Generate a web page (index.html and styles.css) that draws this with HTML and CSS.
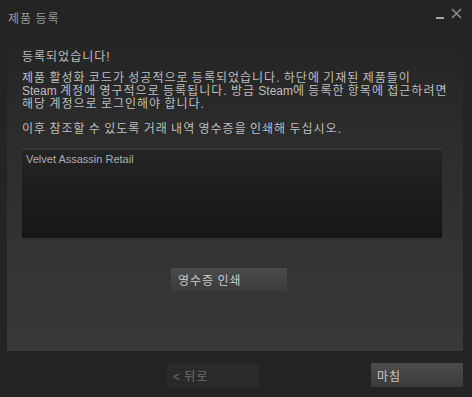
FILE: index.html
```html
<!DOCTYPE html>
<html lang="ko">
<head>
  <meta charset="UTF-8">
  <meta name="viewport" content="width=device-width, initial-scale=1.0">
  <title>제품 등록</title>
  <link rel="stylesheet" href="styles.css">
</head>
<body>
  <div class="window">
    <header class="titlebar">
      <span class="title">제품 등록</span>
      <div class="controls">
        <span class="minimize"></span>
        <svg class="close" width="11" height="11" viewBox="0 0 11 11">
          <path d="M1 1 L10 10 M10 1 L1 10" stroke="#8a8a8a" stroke-width="1.6" fill="none"/>
        </svg>
      </div>
    </header>

    <!-- Main content panel -->
    <div class="panel">
      <p class="heading">등록되었습니다!</p>
      <p class="text">제품 활성화 코드가 성공적으로 등록되었습니다. 하단에 기재된 제품들이<br>
        <span class="en">Steam</span> 계정에 영구적으로 등록됩니다. 방금 <span class="en">Steam</span>에 등록한 항목에 접근하려면<br>
        해당 계정으로 로그인해야 합니다.</p>
      <p class="text">이후 참조할 수 있도록 거래 내역 영수증을 인쇄해 두십시오.</p>

      <ul class="product-list">
        <li>Velvet Assassin Retail</li>
      </ul>

      <div class="print-row">
        <button class="btn print">영수증 인쇄</button>
      </div>
    </div>

    <footer class="footer">
      <button class="btn back">&lt; 뒤로</button>
      <button class="btn finish">마침</button>
    </footer>
  </div>
</body>
</html>
```

FILE: styles.css
```css
body {
  margin: 0;
  padding: 0;
  background-color: #242424;
  font-family: Arial, "Liberation Sans", "Noto Sans CJK KR", sans-serif;
  font-size: 12px;
  letter-spacing: 1px;
  word-spacing: -1px;
}

.en {
  letter-spacing: 0;
}

.window {
  width: 472px;
  height: 397px;
  display: flex;
  flex-direction: column;
}

.titlebar {
  height: 32px;
  display: flex;
  justify-content: space-between;
  align-items: flex-start;
  padding: 0 10px 0 8px;
}

.title {
  color: #9a9a9a;
  margin-top: 9px;
}

.controls {
  display: flex;
  align-items: flex-start;
  gap: 7px;
  margin-top: 8px;
}

.minimize {
  width: 8px;
  height: 2px;
  background-color: #a8a8a8;
  margin-top: 9px;
}

.close {
  display: block;
}

.panel {
  margin: 0 9px 0 7px;
  height: 319px;
  padding: 18px 15px 0 15px;
  box-sizing: border-box;
  background: linear-gradient(to bottom, #242424 0%, #2e2e2e 40%, #393939 100%);
}

.panel p {
  margin: 0;
  color: #bebebe;
  white-space: nowrap;
}

.heading {
  line-height: 14px;
  margin-bottom: 8px !important;
}

.text {
  line-height: 13px;
  margin-bottom: 12px !important;
}

.product-list {
  list-style: none;
  margin: 0;
  padding: 2px 4px;
  width: 420px;
  height: 90px;
  box-sizing: border-box;
  border-top: 2px solid #363636;
  background: linear-gradient(to bottom, #242424, #161616);
  color: #a9b0b6;
  font-size: 11px;
  letter-spacing: 0;
  word-spacing: 0;
}

.product-list li {
  line-height: 14px;
}

.print-row {
  padding: 30px 0 0 149px;
}

.btn {
  font-family: inherit;
  font-size: 12px;
  letter-spacing: 1px;
  word-spacing: -1px;
  border: none;
  text-align: left;
  cursor: pointer;
  height: 24px;
  padding: 0 7px;
}

.print {
  width: 116px;
  height: 23px;
  background: linear-gradient(to bottom, #4b4b4b, #3b3b3b);
  color: #cacaca;
}

.footer {
  display: flex;
  justify-content: space-between;
  padding: 12px 9px 0 167px;
}

.back {
  width: 92px;
  background-color: #2a2a2a;
  color: #6e6e6e;
  padding-left: 6px;
}

.finish {
  width: 92px;
  background: linear-gradient(to bottom, #4d4d4d, #3b3b3b);
  color: #cacaca;
  padding-left: 6px;
}
```
